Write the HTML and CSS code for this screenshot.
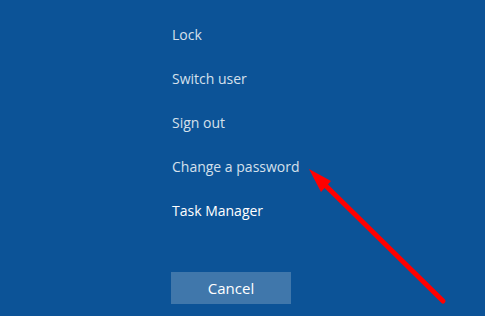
FILE: index.html
```html
<!DOCTYPE html>
<html lang="en">
<head>
    <meta charset="UTF-8">
    <meta name="viewport" content="width=device-width, initial-scale=1.0">
    <title>Security options</title>
    <link rel="stylesheet" href="styles.css">
</head>
<body>
    <div class="screen">
        <ul class="options">
            <li class="option">Lock</li>
            <li class="option">Switch user</li>
            <li class="option">Sign out</li>
            <li class="option">Change a password</li>
            <li class="option active">Task Manager</li>
        </ul>
        <button class="cancel">Cancel</button>

        <!-- annotation arrow -->
        <svg class="arrow" width="485" height="316" viewBox="0 0 485 316">
            <line x1="443" y1="301" x2="322" y2="182" stroke="#ff0000" stroke-width="5" stroke-linecap="round"/>
            <polygon points="309,169 331,181 321,192" fill="#ff0000"/>
        </svg>
    </div>
</body>
</html>
```

FILE: styles.css
```css
html, body {
    margin: 0;
    padding: 0;
}
.screen {
    position: relative;
    width: 485px;
    height: 316px;
    background-color: #0c5397;
    font-family: "Open Sans", "Noto Sans", sans-serif;
    overflow: hidden;
}
.options {
    list-style: none;
    margin: 0;
    padding: 24px 0 0 172px;
    display: flex;
    flex-direction: column;
    gap: 0;
}
.option {
    height: 44px;
    line-height: 22px;
    font-size: 14px;
    color: #d5e0ec;
}
.option.active {
    color: #ffffff;
}
.cancel {
    display: block;
    margin: 28px 0 0 171px;
    width: 120px;
    height: 32px;
    border: none;
    background-color: #4077ab;
    color: #ffffff;
    font-family: "Open Sans", "Noto Sans", sans-serif;
    font-size: 15px;
    padding: 0;
}
.arrow {
    position: absolute;
    left: 0;
    top: 0;
}
```
